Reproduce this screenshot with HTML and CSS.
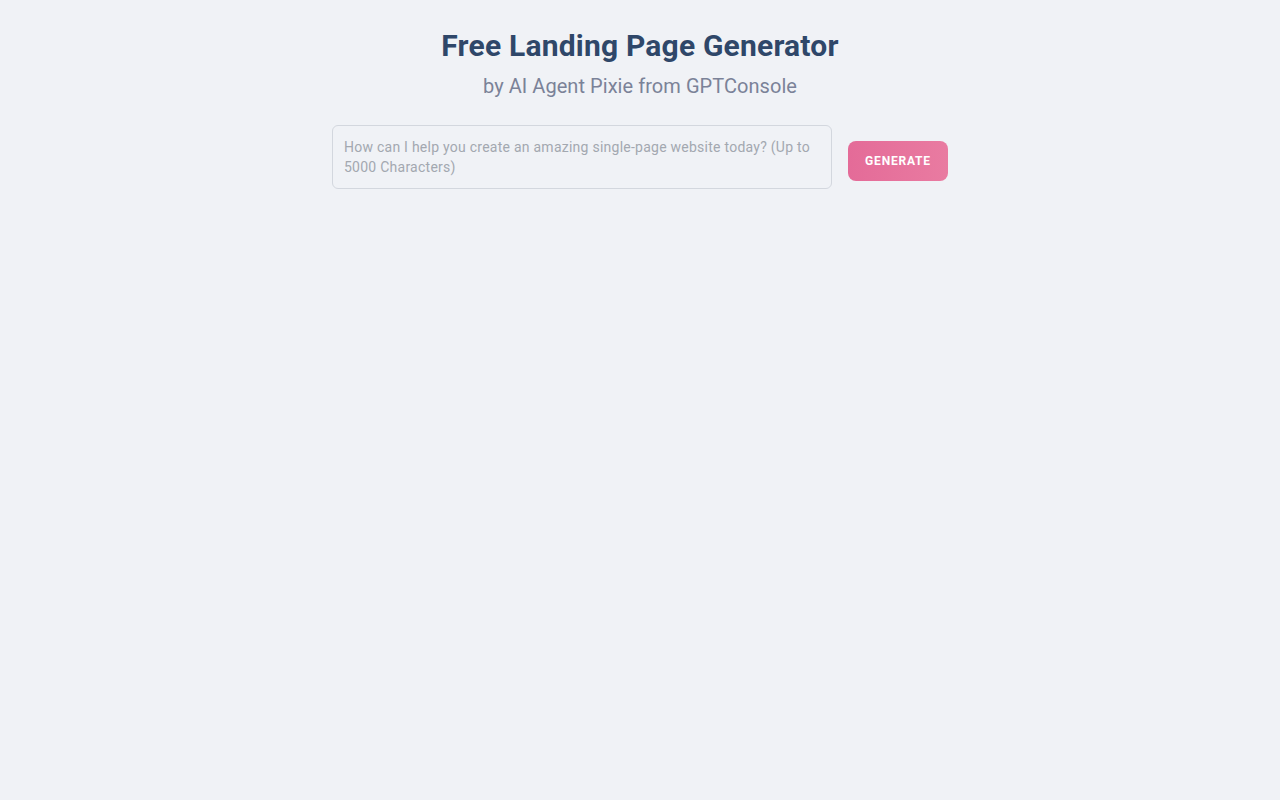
FILE: index.html
```html
<!DOCTYPE html>
<html lang="en">
<head>
<meta charset="utf-8">
<title>Free Landing Page Generator</title>
<link rel="stylesheet" href="styles.css">
</head>
<body>
<main class="page">
  <header class="hero">
    <h1 class="title">Free Landing Page Generator</h1>
    <p class="subtitle">by AI Agent Pixie from GPTConsole</p>
  </header>
  <form class="prompt-row">
    <textarea class="prompt" placeholder="How can I help you create an amazing single-page website today? (Up to 5000 Characters)"></textarea>
    <button type="button" class="generate">GENERATE</button>
  </form>
</main>
</body>
</html>
```
FILE: styles.css
```css
html, body {
  margin: 0;
  padding: 0;
  background: #f0f2f6;
  font-family: Roboto, "Noto Sans", Arial, sans-serif;
}
.page {
  display: flex;
  flex-direction: column;
  align-items: center;
  padding-top: 26px;
}
.hero {
  text-align: center;
}
.title {
  margin: 0;
  font-size: 30px;
  line-height: 40px;
  font-weight: 700;
  letter-spacing: 0.2px;
  color: #2f4769;
}
.subtitle {
  margin: 6px 0 0;
  font-size: 20px;
  line-height: 28px;
  font-weight: 400;
  letter-spacing: 0.05px;
  color: #7b8298;
}
.prompt-row {
  display: flex;
  align-items: flex-start;
  gap: 16px;
  margin-top: 25px;
}
.prompt {
  box-sizing: border-box;
  width: 500px;
  height: 64px;
  padding: 11px 11px;
  border: 1px solid #d3d7de;
  border-radius: 6px;
  background: #f0f2f6;
  font-family: Roboto, "Noto Sans", Arial, sans-serif;
  font-size: 14px;
  line-height: 20px;
  letter-spacing: 0.25px;
  color: #374151;
  resize: none;
  outline: none;
}
.prompt::placeholder {
  color: #a3a8b0;
}
.generate {
  margin-top: 16px;
  width: 100px;
  height: 40px;
  border: none;
  border-radius: 8px;
  background: linear-gradient(90deg, #e46b98, #e97ba1);
  color: #fff;
  font-family: Roboto, "Noto Sans", Arial, sans-serif;
  font-size: 12px;
  font-weight: 700;
  letter-spacing: 0.8px;
  cursor: pointer;
}
```
